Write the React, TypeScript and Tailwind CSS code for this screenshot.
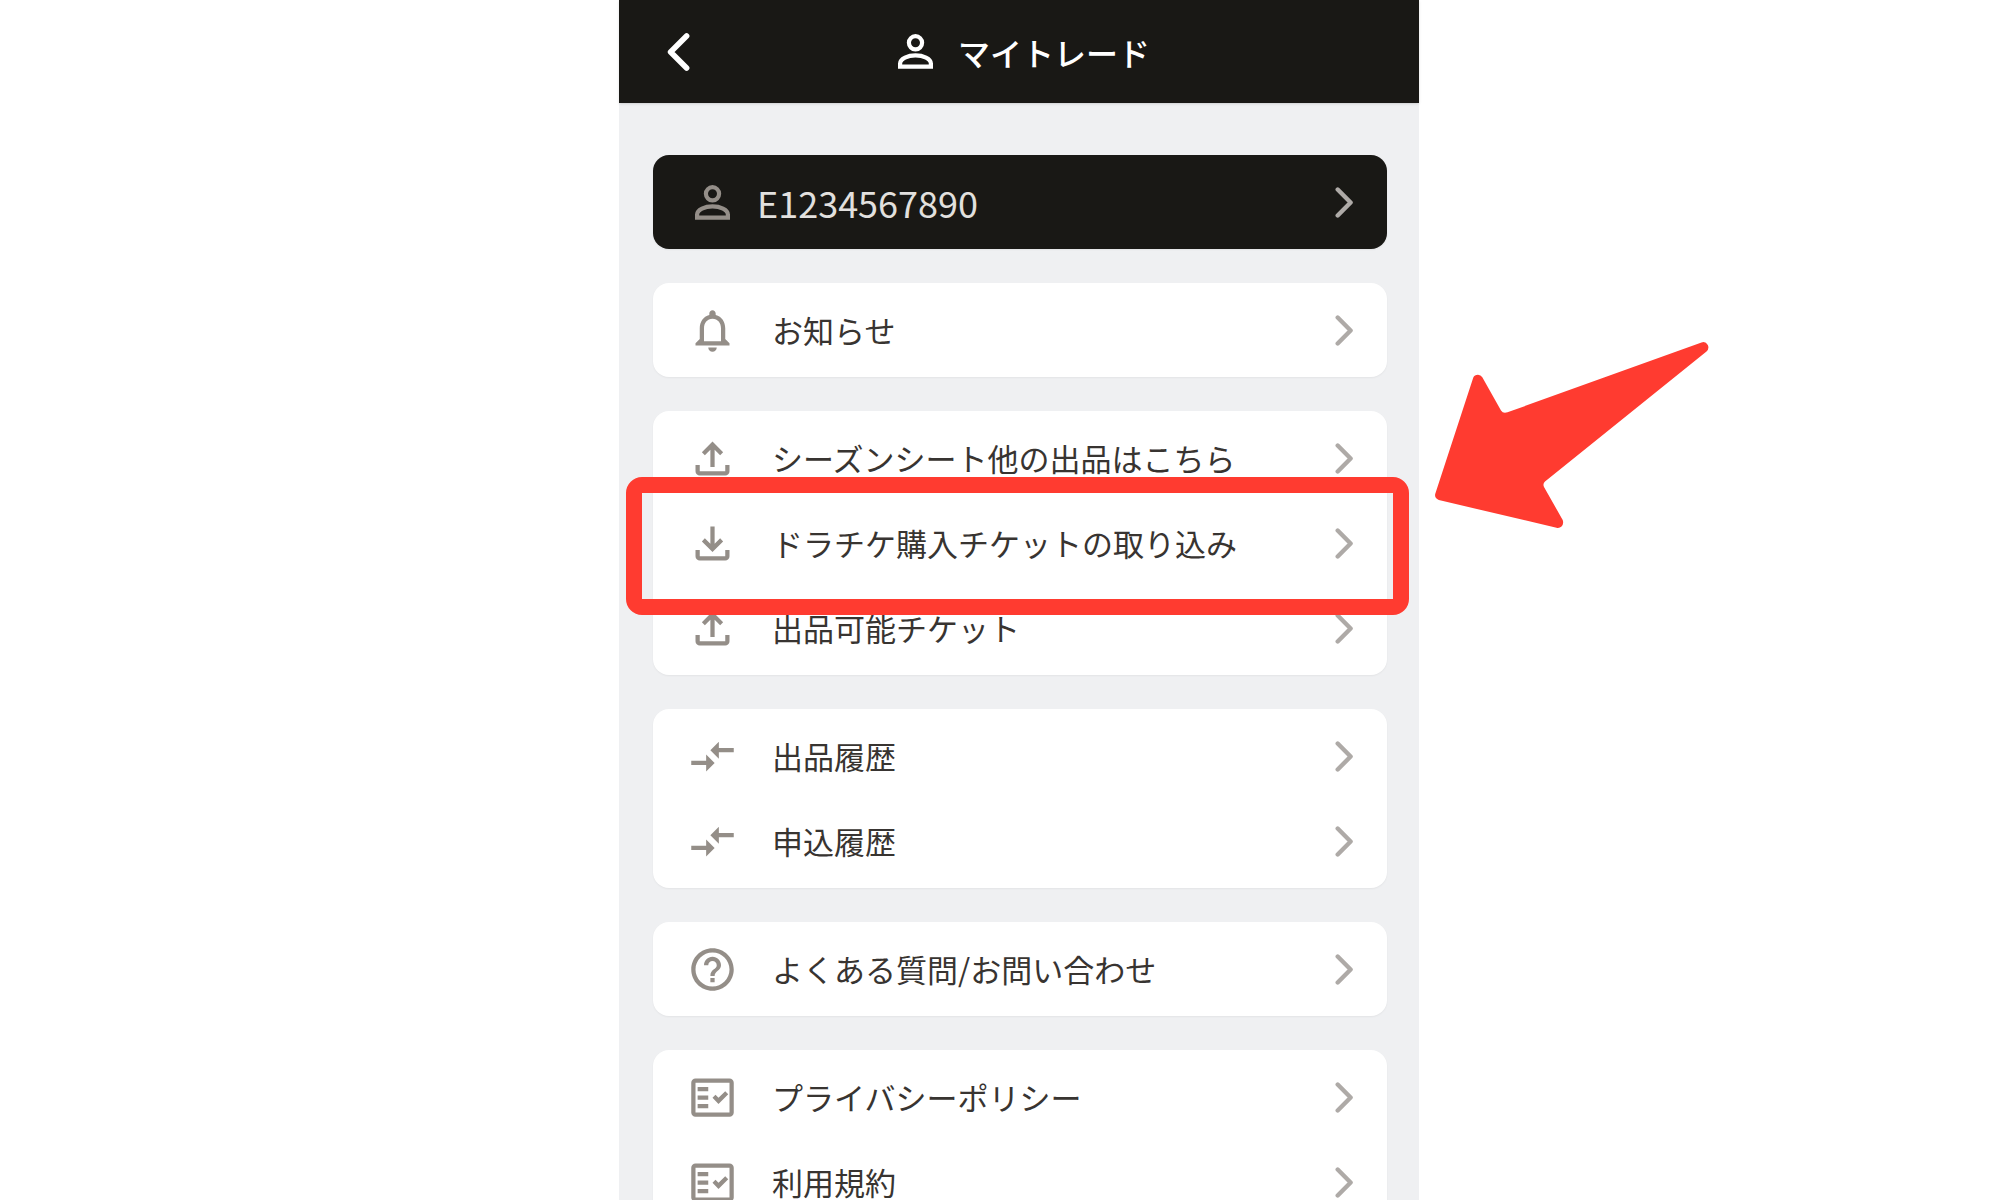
import { useState } from 'react'
import type { ReactNode } from 'react'
import { MdCompareArrows, MdHelpOutline, MdNotificationsNone, MdOutlineFactCheck } from 'react-icons/md'

const Person = () => (
    <svg viewBox="0 0 35 35" fill="none" stroke="currentColor" strokeWidth="4.2" className="size-[35px] shrink-0" aria-hidden="true">
        <circle cx="17.5" cy="8.8" r="6.6" />
        <path d="M2.1 32.600V29.500C2.100 24.500 10 21.400 17.500 21.400S32.900 24.500 32.900 29.500V32.600Z" />
    </svg>
)

const Upload = () => (
    <svg viewBox="0 -960 960 960" fill="currentColor" className="size-[51px]" aria-hidden="true">
        <path d="M440-320v-326L336-542l-56-58 200-200 200 200-56 58-104-104v326h-80ZM240-160q-33 0-56.5-23.5T160-240v-120h80v120h480v-120h80v120q0 33-23.5 56.5T720-160H240Z" />
    </svg>
)

const Download = () => (
    <svg viewBox="0 -960 960 960" fill="currentColor" className="size-[51px]" aria-hidden="true">
        <path d="M480-320 280-520l56-58 104 104v-326h80v326l104-104 56 58-200 200ZM240-160q-33 0-56.5-23.5T160-240v-120h80v120h480v-120h80v120q0 33-23.5 56.5T720-160H240Z" />
    </svg>
)

const Chevron = () => (
    <svg viewBox="0 0 18 31" fill="none" stroke="currentColor" strokeWidth="4.4" strokeLinecap="round" strokeLinejoin="round" className="h-[31px] w-[18px] shrink-0 text-[#aeaaa7]" aria-hidden="true">
        <path d="M2.700 2.500 15.600 15.500 2.700 28.500" />
    </svg>
)

type Item = { label: string; icon: ReactNode }

const groups: Item[][] = [
    [{ label: 'お知らせ', icon: <MdNotificationsNone /> }],
    [
        { label: 'シーズンシート他の出品はこちら', icon: <Upload /> },
        { label: 'ドラチケ購入チケットの取り込み', icon: <Download /> },
        { label: '出品可能チケット', icon: <Upload /> },
    ],
    [
        { label: '出品履歴', icon: <MdCompareArrows /> },
        { label: '申込履歴', icon: <MdCompareArrows /> },
    ],
    [{ label: 'よくある質問/お問い合わせ', icon: <MdHelpOutline /> }],
    [
        { label: 'プライバシーポリシー', icon: <MdOutlineFactCheck /> },
        { label: '利用規約', icon: <MdOutlineFactCheck /> },
    ],
]

// red frame and arrow pointing at the selected row
const Pointer = () => (
    <div className="pointer-events-none absolute -top-6 -right-[22px] -bottom-[29px] -left-[27px] z-10 rounded-2xl border-16 border-[#ff3b30]">
        <svg viewBox="35 20 275 190" fill="#ff3b30" className="absolute -top-[153px] left-[793px] h-[190px] w-[275px]" aria-hidden="true">
            <path d="M73.3 57.5Q74.5 54.8 78 54.8 80.8 54.8 82.3 57.3L101 90.5Q103 93.7 107.5 92.3L301.500 22.500Q305.500 21 307.800 25 309.500 28.500 306.500 31.500L145 161.500Q142.500 163.800 144 167L162.700 200Q164 204 161.500 206.500 159.500 208.500 156.500 207.800L38.800 180Q34.300 178 35.200 174Z" />
        </svg>
    </div>
)

const App = () => {

    const [active, setActive] = useState('ドラチケ購入チケットの取り込み')

    return (
        <div className="h-screen overflow-hidden bg-white font-['Noto_Sans_CJK_JP',sans-serif] lg:pl-[38px]" lang="ja">
            <div className="mx-auto min-h-full w-full max-w-[800px] bg-[#eff0f2]">
                <header className="relative flex h-[103px] items-center justify-center gap-[25px] bg-[#191815] pl-2.5 text-white shadow-sm">
                    <button className="absolute left-12 flex" aria-label="戻る">
                        <svg viewBox="0 0 24 38" fill="none" stroke="currentColor" strokeWidth="5.6" strokeLinecap="round" strokeLinejoin="round" className="h-[38px] w-6" aria-hidden="true">
                            <path d="M19.600 3 3.600 19l16 16" />
                        </svg>
                    </button>
                    <Person />
                    <h1 className="text-[32px] font-medium">マイトレード</h1>
                </header>

                <main className="flex flex-col gap-[34px] py-[52px] pr-8 pl-[34px]">
                    <a href="#account" className="flex h-[94px] items-center rounded-2xl bg-[#191815] pr-[34px] pl-[42px] text-[#e2e0de] shadow-xs">
                        <span className="text-[#948e88]"><Person /></span>
                        <span className="grow pl-[27px] text-[36px]">E1234567890</span>
                        <Chevron />
                    </a>
                    {groups.map((group) => (
                        <ul key={group[0].label} className="rounded-2xl bg-white pt-[5px] pb-1 shadow-xs">
                            {group.map((item) => (
                                <li key={item.label} className="relative">
                                    <a href="#menu" onClick={() => setActive(item.label)} className="flex h-[85px] items-center pr-[34px] pl-[34px] text-[#383431]">
                                        <span className="text-[51px] text-[#948e88]">{item.icon}</span>
                                        <span className="grow pl-[34px] text-[31px]">{item.label}</span>
                                        <Chevron />
                                    </a>
                                    {active === item.label && <Pointer />}
                                </li>
                            ))}
                        </ul>
                    ))}
                </main>
            </div>
        </div>
    )
}

export default App
